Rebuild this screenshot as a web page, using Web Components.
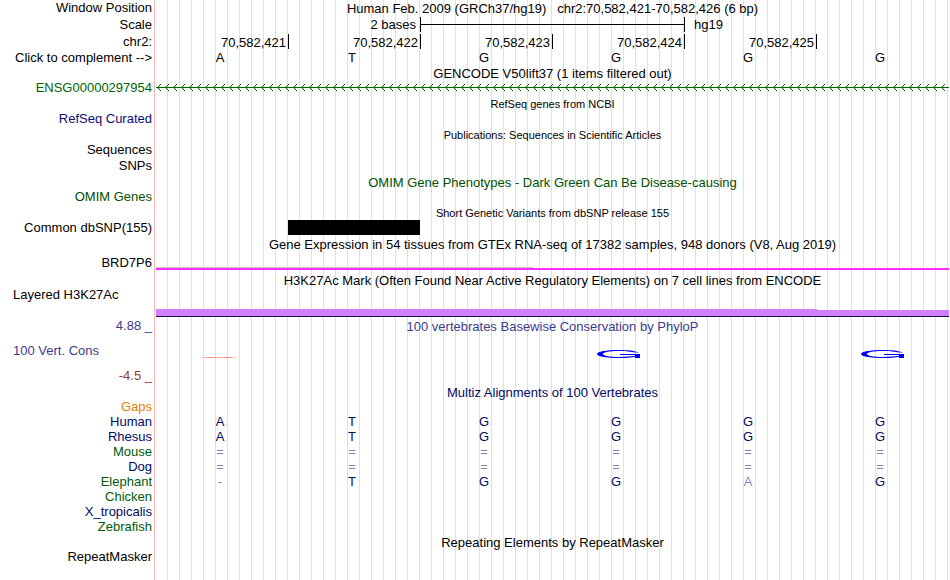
<!DOCTYPE html>
<html lang="en">
<head>
<meta charset="utf-8">
<title>chr2:70,582,421-70,582,426</title>
<style>
  body {
    margin: 0;
    font: 13px/15px "Liberation Sans", Arial, sans-serif;
    color: #000;
    background: #fff;
  }
  .gencode { color: #006400; }
  .refseq { color: #0c0c78; }
  .omim { color: #005000; }
  .cons { color: #3c3c8c; }
  .neg { color: #8c3c3c; }
  .gap { color: #e68200; }
  .navy { color: #000a64; }
  .green { color: #005a0a; }
</style>
</head>
<body>

<genome-browser>
  <track-row h="17"><span slot="label">Window Position</span><track-title>Human Feb. 2009 (GRCh37/hg19) &nbsp; chr2:70,582,421-70,582,426 (6 bp)</track-title></track-row>
  <track-row h="17"><span slot="label">Scale</span><scale-bar><span slot="size">2 bases</span><span slot="db">hg19</span></scale-bar></track-row>
  <track-row h="16"><span slot="label">chr2:</span><base-ruler positions="70,582,421|70,582,422|70,582,423|70,582,424|70,582,425"></base-ruler></track-row>
  <track-row h="15"><span slot="label">Click to complement --&gt;</span><base-row seq="ATGGGG"></base-row></track-row>

  <track-row h="15"><track-title>GENCODE V50lift37 (1 items filtered out)</track-title></track-row>
  <track-row h="15" class="gencode"><span slot="label">ENSG00000297954</span><intron-line></intron-line></track-row>

  <track-row h="16"><track-title dense>RefSeq genes from NCBI</track-title></track-row>
  <track-row h="15" class="refseq"><span slot="label">RefSeq Curated</span></track-row>

  <track-row h="16"><track-title dense>Publications: Sequences in Scientific Articles</track-title></track-row>
  <track-row h="16"><span slot="label">Sequences</span></track-row>
  <track-row h="16"><span slot="label">SNPs</span></track-row>

  <track-row h="15" class="omim"><track-title>OMIM Gene Phenotypes - Dark Green Can Be Disease-causing</track-title></track-row>
  <track-row h="15" class="omim"><span slot="label">OMIM Genes</span></track-row>

  <track-row h="16"><track-title dense>Short Genetic Variants from dbSNP release 155</track-title></track-row>
  <track-row h="16"><span slot="label">Common dbSNP(155)</span><snp-item></snp-item></track-row>

  <track-row h="19"><track-title>Gene Expression in 54 tissues from GTEx RNA-seq of 17382 samples, 948 donors (V8, Aug 2019)</track-title></track-row>
  <track-row h="17"><span slot="label">BRD7P6</span><gtex-bar></gtex-bar></track-row>

  <track-row h="15"><track-title>H3K27Ac Mark (Often Found Near Active Regulatory Elements) on 7 cell lines from ENCODE</track-title></track-row>
  <track-row h="31" start><span slot="label">Layered H3K27Ac</span><signal-band></signal-band></track-row>

  <track-row h="25" class="cons"><span slot="label">4.88 _</span><track-title>100 vertebrates Basewise Conservation by PhyloP</track-title></track-row>
  <track-row h="25" start class="cons"><span slot="label">100 Vert. Cons</span><phylop-logo></phylop-logo></track-row>
  <track-row h="16" class="neg"><span slot="label">-4.5 _</span></track-row>

  <track-row h="15" class="navy"><track-title>Multiz Alignments of 100 Vertebrates</track-title></track-row>
  <track-row h="15" class="gap"><span slot="label">Gaps</span></track-row>
  <track-row h="15" class="navy"><span slot="label">Human</span><base-row seq="ATGGGG"></base-row></track-row>
  <track-row h="15" class="navy"><span slot="label">Rhesus</span><base-row seq="ATGGGG"></base-row></track-row>
  <track-row h="15"><span slot="label" class="green">Mouse</span><base-row class="navy" seq="======"></base-row></track-row>
  <track-row h="15" class="navy"><span slot="label">Dog</span><base-row seq="======"></base-row></track-row>
  <track-row h="15"><span slot="label" class="green">Elephant</span><base-row class="navy" seq="-TGGAG" ref="ATGGGG"></base-row></track-row>
  <track-row h="15" class="green"><span slot="label">Chicken</span></track-row>
  <track-row h="15" class="navy"><span slot="label">X_tropicalis</span></track-row>
  <track-row h="15" class="green"><span slot="label">Zebrafish</span></track-row>

  <track-row h="15"><track-title>Repeating Elements by RepeatMasker</track-title></track-row>
  <track-row h="15"><span slot="label">RepeatMasker</span></track-row>
</genome-browser>

<script>
function define(name, html, setup) {
  const template = document.createElement("template");
  template.innerHTML = html;

  customElements.define(
    name,
    class extends HTMLElement {
      constructor() {
        super();
        this.attachShadow({ mode: "open" });
        this.shadowRoot.appendChild(template.content.cloneNode(true));
      }

      connectedCallback() {
        if (setup) setup(this, this.shadowRoot);
      }
    }
  );
}

// side label column is 156px wide, guide lines repeat every 12px after it
define("genome-browser", `
<style>
:host {
  display: block;
  min-height: 100vh;
  background:
    linear-gradient(#ffb4b4, #ffb4b4) 154px 0 / 1px 100% no-repeat,
    linear-gradient(#fff, #fff) 0 0 / 156px 100% no-repeat,
    repeating-linear-gradient(to right, #fff 0 11px, #dcdcff 11px 12px);
}
</style>
<slot></slot>
`);

define("track-row", `
<style>
:host {
  display: grid;
  grid-template-columns: 156px minmax(0, 1fr);
  padding-right: 1px;
  white-space: nowrap;
}
.label { padding: 0 4px 0 13px; text-align: right; }
:host([start]) .label { text-align: left; }
.data { display: grid; height: 100%; }
</style>
<div class="label"><slot name="label"></slot></div>
<div class="data"><slot></slot></div>
`, (el) => {
  el.style.height = el.getAttribute("h") + "px";
});

define("track-title", `
<style>
:host { display: block; text-align: center; line-height: 17px; }
:host([dense]) { font-size: 11px; line-height: 19px; }
</style>
<slot></slot>
`);

define("scale-bar", `
<style>
:host { display: grid; grid-template-columns: repeat(6, 1fr); padding-right: 1px; }
.size { grid-column: 1 / 3; padding-right: 4px; text-align: right; }
.bar {
  grid-column: 3 / 5;
  height: 15px;
  margin-right: -1px;
  border: solid #000;
  border-width: 0 1px;
  box-sizing: border-box;
  background: linear-gradient(#000, #000) 0 7px / 100% 1px no-repeat;
}
.db { padding-left: 10px; }
</style>
<div class="size"><slot name="size"></slot></div>
<div class="bar"></div>
<div class="db"><slot name="db"></slot></div>
`);

define("base-ruler", `
<style>
:host { display: grid; grid-template-columns: repeat(6, 1fr); padding-right: 1px; }
span {
  height: 15px;
  line-height: 17px;
  margin-right: -1px;
  padding-right: 2px;
  border-right: 1px solid #000;
  text-align: right;
}
</style>
`, (el, root) => {
  el.getAttribute("positions").split("|").forEach((pos) => {
    const span = document.createElement("span");
    span.textContent = pos;
    root.appendChild(span);
  });
});

define("base-row", `
<style>
:host { display: grid; grid-template-columns: repeat(6, 1fr); padding-right: 1px; }
span { padding-right: 4px; text-align: center; }
.faded { opacity: 0.5; }
</style>
`, (el, root) => {
  const ref = el.getAttribute("ref");
  [...el.getAttribute("seq")].forEach((base, i) => {
    const span = document.createElement("span");
    span.textContent = base;
    if (base === "=" || (ref && ref[i] !== base)) span.className = "faded";
    root.appendChild(span);
  });
});

define("intron-line", `
<style>
:host { display: block; }
svg { display: block; width: 100%; height: 15px; }
</style>
<svg aria-hidden="true">
  <defs>
    <pattern id="arrows" width="8" height="15" patternUnits="userSpaceOnUse">
      <path d="M5 4L1.5 7.5L5 11" fill="none" stroke="currentColor"/>
    </pattern>
  </defs>
  <rect width="100%" height="15" fill="url(#arrows)"/>
  <rect y="7" width="100%" height="1" fill="currentColor"/>
</svg>
`);

define("snp-item", `
<style>
:host { display: grid; grid-template-columns: repeat(6, 1fr); padding-right: 1px; }
div { grid-column: 2; height: 15px; background: #000; }
</style>
<div></div>
`);

define("gtex-bar", `
<style>
:host { display: flex; flex-direction: column; padding-top: 12px; }
.model { width: 47.6%; height: 1px; background: #c8c8c8; }
.level { height: 2px; background: #ff2cff; }
</style>
<div class="model"></div>
<div class="level"></div>
`);

define("signal-band", `
<style>
:host {
  display: grid;
  grid-template-columns: 5fr 1fr;
  align-items: end;
  align-self: start;
  height: 30px;
}
div { height: 7px; background: #d080ff; border-bottom: 1px solid #1e0a50; }
.low { height: 6px; }
</style>
<div></div>
<div class="low"></div>
`);

define("phylop-logo", `
<style>
:host { display: grid; grid-template-columns: repeat(6, 1fr); justify-items: center; }
svg { display: block; }
.neg { grid-column: 1; margin: 14px 7px 0 0; }
.pos { margin-top: 7px; }
.c4 { grid-column: 4; }
.c6 { grid-column: 6; }
</style>
<svg class="neg" width="40" height="1" aria-hidden="true">
  <defs>
    <linearGradient id="fade">
      <stop offset="0" stop-color="#f66" stop-opacity="0"/>
      <stop offset="0.25" stop-color="#f66" stop-opacity="0.8"/>
      <stop offset="0.5" stop-color="#f66" stop-opacity="0.5"/>
      <stop offset="0.75" stop-color="#f66" stop-opacity="0.8"/>
      <stop offset="1" stop-color="#f66" stop-opacity="0"/>
    </linearGradient>
  </defs>
  <rect width="40" height="1" fill="url(#fade)"/>
</svg>
<svg class="pos c4" width="43" height="8" aria-hidden="true"></svg>
<svg class="pos c6" width="43" height="8" aria-hidden="true"></svg>
`, (el, root) => {
  root.querySelectorAll(".pos").forEach((svg) => {
    svg.innerHTML = `
      <path fill="#00f" d="M42 2.6C38 .8 31 0 22 0C9 0 0 1.6 0 4S9 8 22 8C29 8 35 7.6 39 6.8V5.6C34 6.6 29 7 22 7C13 7 6 6 6 4S13 1 22 1C30 1 34 1.6 38 2.6Z"/>
      <path fill="#00f" d="M23 4H43V8H38V5H23Z"/>`;
  });
});
</script>
</body>
</html>
